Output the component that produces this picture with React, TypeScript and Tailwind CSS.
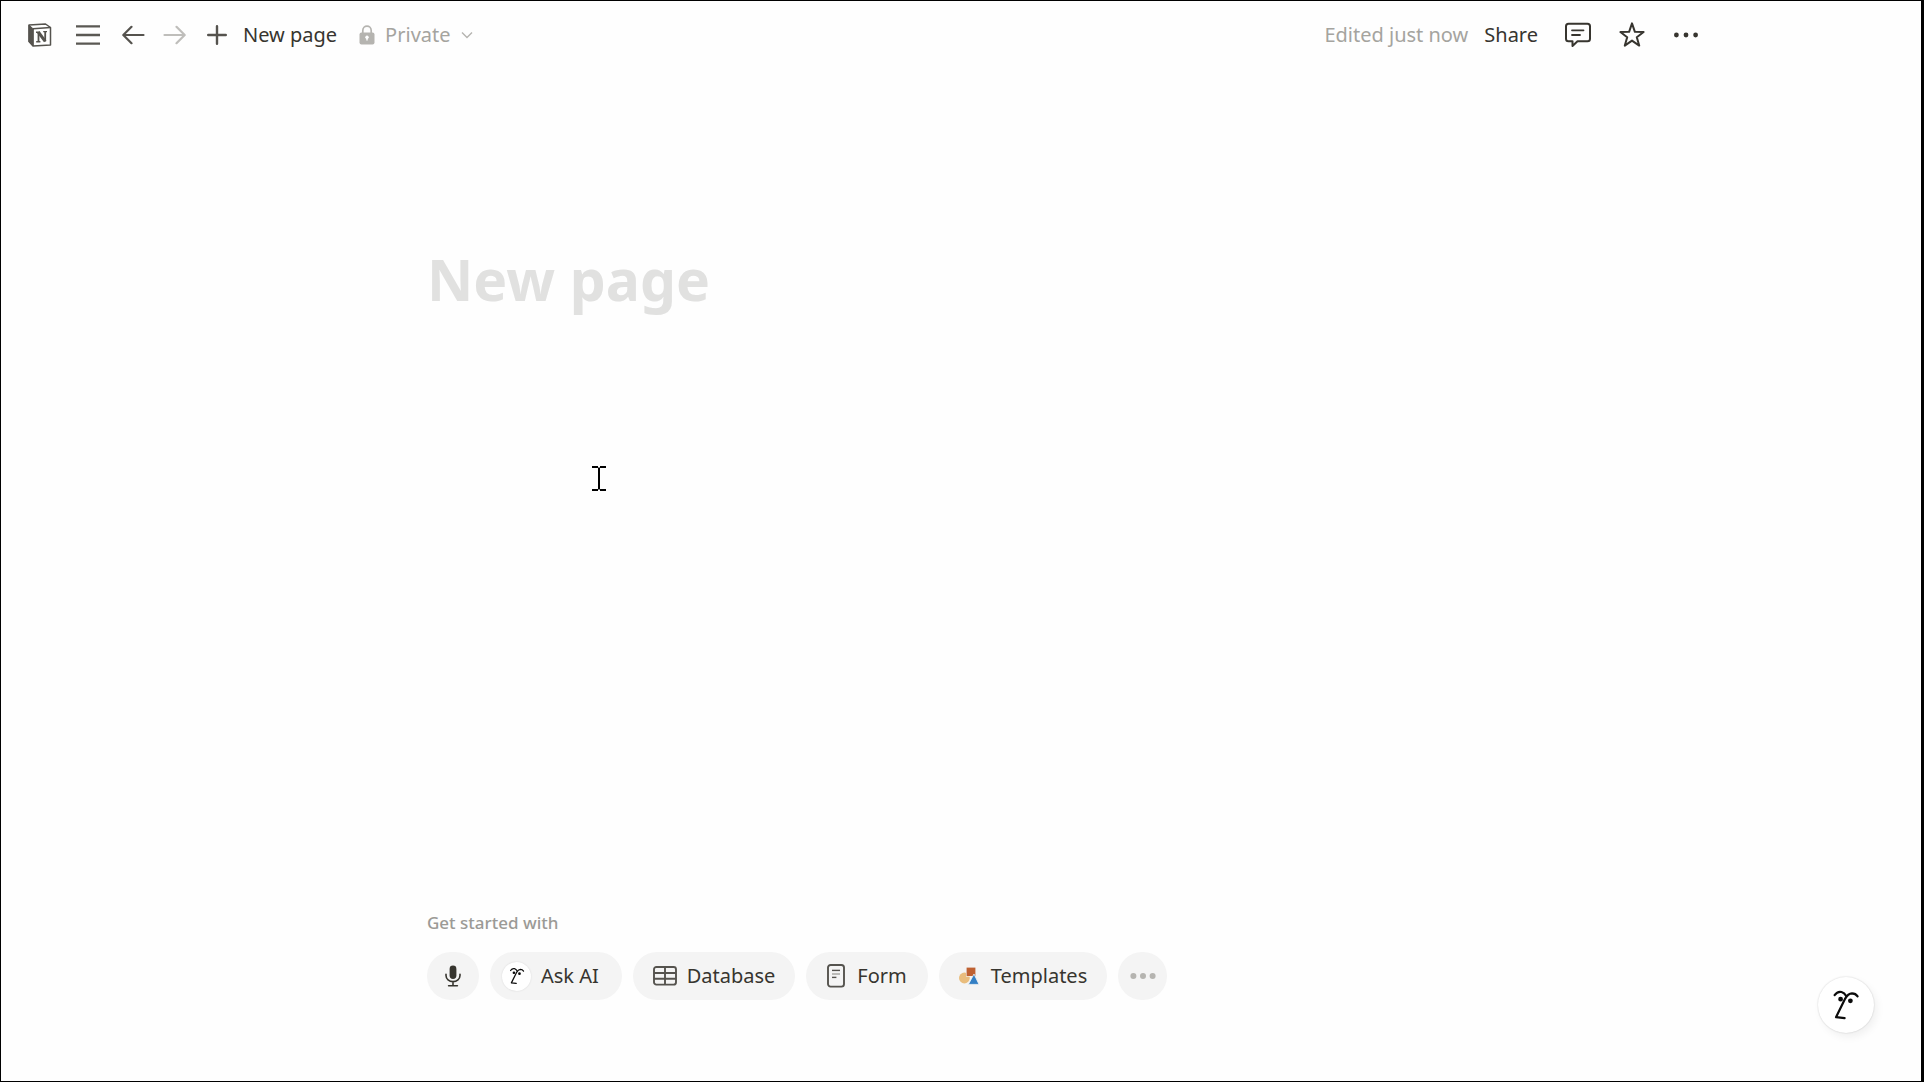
import React, { useState } from "react";

const Logo = () => (
    <svg width="24" height="24" viewBox="0 0 24 24" fill="none" stroke="#55534e" strokeLinejoin="round">
        <path d="M1 2 L17.5 1 L22.5 4.5 V22 L5 23 L1 18.5 Z" strokeWidth="1.5" fill="#fff" />
        <path d="M1 2 L5.3 6 V23 L1 18.5 Z" fill="#55534e" strokeWidth="1" />
        <path d="M5 5.8 L22.5 4.6" strokeWidth="1.5" />
        <path d="M10.5 9.2 V18.4 M17.2 8.6 V18.4" strokeWidth="1.8" />
        <path d="M10.3 9 L17.2 18.4" strokeWidth="3" />
        <path d="M8 9.2 H11.5 M15.2 8.6 H19 M8.2 18.8 H12.4" strokeWidth="1.4" />
    </svg>
);

const Menu = () => (
    <svg width="24" height="20" viewBox="0 0 24 20" stroke="#5a5853" strokeWidth="2.4">
        <path d="M0 1.4 H24 M0 10 H24 M0 18.6 H24" />
    </svg>
);

const Arrow = ({ color, flip }: { color: string; flip?: boolean }) => (
    <svg width="23" height="20" viewBox="0 0 23 20" fill="none" stroke={color} strokeWidth="2.2" strokeLinecap="round" strokeLinejoin="round">
        <path d={flip ? "M1.5 10 H21.5 M13.5 1.8 L21.7 10 L13.5 18.2" : "M21.5 10 H1.5 M9.5 1.8 L1.3 10 L9.5 18.2"} />
    </svg>
);

const Plus = () => (
    <svg width="20" height="20" viewBox="0 0 20 20" stroke="#55534e" strokeWidth="2.4" strokeLinecap="round">
        <path d="M10 1.2 V18.8 M1.2 10 H18.8" />
    </svg>
);

const Lock = () => (
    <svg width="16" height="20" viewBox="0 0 16 20" fill="none">
        <path d="M3.8 9 V5.4 A4.1 4.1 0 0 1 12.2 5.4 V9" stroke="#b5b4b0" strokeWidth="1.7" />
        <rect x="0.5" y="7.5" width="15" height="12" rx="2" fill="#b5b4b0" />
        <circle cx="8" cy="12.2" r="1.7" fill="#fff" />
        <path d="M8 12.5 V15" stroke="#fff" strokeWidth="1.4" strokeLinecap="round" />
    </svg>
);

const Chevron = () => (
    <svg width="12" height="8" viewBox="0 0 12 8" fill="none" stroke="#b5b4b0" strokeWidth="1.4">
        <path d="M1 1.5 L6 6.5 L11 1.5" />
    </svg>
);

const Comment = () => (
    <svg width="26" height="26" viewBox="0 0 26 26" fill="none" stroke="#37352f" strokeWidth="2" strokeLinecap="round" strokeLinejoin="round">
        <path d="M3.5 1.8 H22.5 Q25 1.8 25 4.3 V16.8 Q25 19.3 22.5 19.3 H12.5 L7.5 24 V19.3 H3.5 Q1 19.3 1 16.8 V4.3 Q1 1.8 3.5 1.8 Z" />
        <path d="M7 8.3 H18.5 M7 13 H15" strokeWidth="1.8" />
    </svg>
);

const Star = () => (
    <svg width="26" height="26" viewBox="0 0 26 26" fill="none" stroke="#37352f" strokeWidth="2" strokeLinejoin="round">
        <path d="M13 1.4 L15.9 9.8 L24.6 10 L17.8 15.2 L20.2 23.6 L13 18.6 L5.8 23.6 L8.2 15.2 L1.4 10 L10.1 9.8 Z" />
    </svg>
);

const Dots = ({ color, r }: { color: string; r: number }) => (
    <svg width="26" height="8" viewBox="0 0 26 8" fill={color}>
        <circle cx="3.4" cy="4" r={r} />
        <circle cx="13" cy="4" r={r} />
        <circle cx="22.6" cy="4" r={r} />
    </svg>
);

const Mic = () => (
    <svg width="16" height="22" viewBox="0 0 16 22" fill="none" stroke="#37352f" strokeWidth="1.6" strokeLinecap="round">
        <rect x="4.6" y="0.5" width="6.8" height="13.4" rx="3.4" fill="#37352f" stroke="none" />
        <path d="M1 9.2 V10.4 A7 6.2 0 0 0 15 10.4 V9.2 M8 16.8 V20.6 M3.6 20.8 H12.4" />
    </svg>
);

const Face = ({ size }: { size: number }) => (
    <svg width={size} height={size} viewBox="0 0 28 32" fill="none" stroke="#0b0b0b" strokeWidth="2.2" strokeLinecap="round" strokeLinejoin="round">
        <path d="M2.6 6.2 Q5.5 2 9.5 3 Q12.5 3.8 14 6.8" />
        <path d="M25.6 7.4 Q23.6 4.4 20 4.4 Q16 4.6 13.2 9.6 L4 28.2 L12.6 29.2" />
        <circle cx="8.6" cy="10.2" r="1.3" fill="#0b0b0b" />
        <circle cx="18.4" cy="11.8" r="1.3" fill="#0b0b0b" />
    </svg>
);

const Table = () => (
    <svg width="24" height="20" viewBox="0 0 24 20" fill="none" stroke="#55534e" strokeWidth="1.9">
        <rect x="1" y="1" width="22" height="17.6" rx="2.4" />
        <path d="M1 7 H23 M1 12.8 H23 M12 1 V18.6" />
    </svg>
);

const FormIcon = () => (
    <svg width="18" height="24" viewBox="0 0 18 24" fill="none" stroke="#55534e">
        <rect x="1" y="1" width="16" height="21.6" rx="2.6" strokeWidth="1.9" />
        <path d="M5 6.4 H13" strokeWidth="1.4" />
        <path d="M5 10 H13" stroke="#a3a29e" strokeWidth="1.4" />
        <path d="M5 13.4 H9.4" strokeWidth="1.4" />
    </svg>
);

const Shapes = () => (
    <svg width="20" height="18" viewBox="0 0 20 18">
        <circle cx="5.4" cy="11" r="5.4" fill="#e9bd7d" />
        <rect x="7" y="0" width="9.6" height="9.6" fill="#f4f4f4" />
        <rect x="7.6" y="0.6" width="8.8" height="8.4" fill="#bf6132" />
        <path d="M15 7 L20 17.4 H9.4 Z" fill="#337fc4" stroke="#f4f4f4" strokeWidth="0.8" />
    </svg>
);

const chips = [
    { label: "Database", icon: <Table />, style: "w-[162px] gap-[10px]" },
    { label: "Form", icon: <FormIcon />, style: "w-[122px] gap-3" },
    { label: "Templates", icon: <Shapes />, style: "w-[168px] gap-3" },
];

const App: React.FC = () => {
    const [title, setTitle] = useState("");

    return (
        <div className="flex min-h-screen flex-col border border-r-[3px] border-black bg-[#fefefe] font-['Noto_Sans',sans-serif] text-[#37352f]">
            <header className="flex h-[67px] items-center justify-between pl-[27px] pr-[222px] text-[20px]">
                <nav className="flex items-center">
                    <a href="#" aria-label="Home"><Logo /></a>
                    <button aria-label="Menu" className="ml-6"><Menu /></button>
                    <button aria-label="Back" className="ml-[22px]"><Arrow color="#55534e" /></button>
                    <button aria-label="Forward" className="ml-[18px]" disabled><Arrow color="#bfbebb" flip /></button>
                    <button aria-label="Add" className="ml-[21px]"><Plus /></button>
                    <a href="#" className="ml-4">New page</a>
                    <button className="ml-[22px] flex items-center text-[#a5a49f]">
                        <Lock />
                        <span className="mx-[10px]">Private</span>
                        <Chevron />
                    </button>
                </nav>
                <div className="flex items-center">
                    <span className="mr-4 text-[#a5a49f]">Edited just now</span>
                    <button className="mr-[27px]">Share</button>
                    <button aria-label="Comments" className="mr-7"><Comment /></button>
                    <button aria-label="Favorite" className="mr-7"><Star /></button>
                    <button aria-label="More"><Dots color="#37352f" r={2.4} /></button>
                </div>
            </header>

            <main className="flex flex-1 flex-col pb-[81px] pl-[426px]">
                <input
                    aria-label="Page title"
                    value={title}
                    onChange={(e) => setTitle(e.target.value)}
                    placeholder="New page"
                    className="mt-[172px] h-20 w-full text-[57px] font-bold outline-none placeholder:text-[#e1e1e0]"
                />
                <section className="mt-auto">
                    <h2 className="mb-[17px] text-[17px] leading-6 font-medium text-[#9b9a96]">Get started with</h2>
                    <div className="flex h-12 gap-[11px] text-[20px] font-[450]">
                        <button aria-label="Voice" className="flex w-[52px] items-center justify-center rounded-full bg-[#f4f4f4]"><Mic /></button>
                        <button className="flex w-[132px] items-center gap-[10px] rounded-full bg-[#f4f4f4] pl-3">
                            <span className="flex size-[29px] items-center justify-center rounded-full bg-white shadow-[0_0_2px_rgba(0,0,0,0.12)]">
                                <Face size={18} />
                            </span>
                            Ask AI
                        </button>
                        {chips.map((chip) => (
                            <button key={chip.label} className={`flex items-center justify-center rounded-full bg-[#f4f4f4] ${chip.style}`}>
                                {chip.icon}
                                {chip.label}
                            </button>
                        ))}
                        <button aria-label="More options" className="flex w-[49px] items-center justify-center rounded-full bg-[#f4f4f4]">
                            <Dots color="#b5b4b0" r={3} />
                        </button>
                    </div>
                </section>
            </main>

            <button
                aria-label="Open assistant"
                className="fixed right-[50px] bottom-[49px] flex size-14 items-center justify-center rounded-full bg-white shadow-[0_0_2px_rgba(0,0,0,0.2),3px_4px_8px_rgba(0,0,0,0.06)]"
            >
                <Face size={32} />
            </button>

            {/* text cursor */}
            <svg className="pointer-events-none absolute top-[466px] left-[592px]" width="14" height="25" viewBox="0 0 14 25" fill="none" stroke="#000" strokeWidth="2">
                <path d="M0 1 H6 M8 1 H14 M0 24 H6 M8 24 H14 M7 1.4 V23.6" />
            </svg>
        </div>
    );
};

export default App;
